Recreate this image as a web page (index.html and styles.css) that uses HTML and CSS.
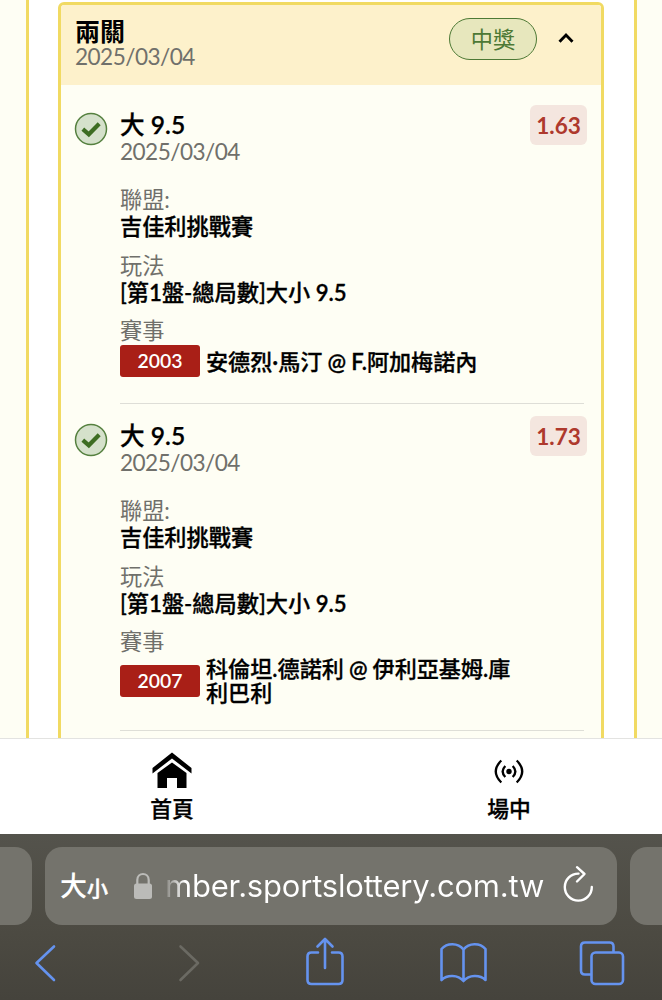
FILE: index.html
```html
<!DOCTYPE html>
<html lang="zh-Hant">
<head>
<meta charset="utf-8">
<title>投注紀錄</title>
<link rel="stylesheet" href="styles.css">
</head>
<body>
<div class="screen">
  <main class="page">
    <div class="outer">
      <section class="ticket">
        <header class="ticket-head">
          <div class="ticket-info">
            <h1 class="ticket-title">兩關</h1>
            <div class="date">2025/03/04</div>
          </div>
          <span class="status">中獎</span>
          <svg class="caret" width="16" height="12" viewBox="0 0 16 12"><path d="M1.500 9.700L8 3L14.500 9.700" fill="none" stroke="#000" stroke-width="2.900"/></svg>
        </header>
        <article class="bet">
          <svg class="check" width="34" height="34" viewBox="0 0 34 34"><circle cx="17" cy="17" r="15.500" fill="#d5e1cb" stroke="#55803f" stroke-width="1.500"/><path d="M8.800 17.200L14.800 22.300L25.200 11.800" fill="none" stroke="#3d6d22" stroke-width="4.200"/></svg>
          <div class="bet-body">
            <div class="bet-top"><div><h2 class="bet-title">大 <b>9.5</b></h2><div class="date">2025/03/04</div></div><span class="odds">1.63</span></div>
            <dl class="facts">
              <dt>聯盟:</dt><dd>吉佳利挑戰賽</dd>
              <dt>玩法</dt><dd>[第<b>1</b>盤-總局數]大小 <b>9.5</b></dd>
              <dt class="event-label">賽事</dt>
            </dl>
            <div class="event"><span class="code">2003</span><span class="teams">安德烈<b>·</b>馬汀 <b>@</b> <b>F.</b>阿加梅諾內</span></div>
          </div>
        </article>
        <article class="bet second">
          <svg class="check" width="34" height="34" viewBox="0 0 34 34"><circle cx="17" cy="17" r="15.500" fill="#d5e1cb" stroke="#55803f" stroke-width="1.500"/><path d="M8.800 17.200L14.800 22.300L25.200 11.800" fill="none" stroke="#3d6d22" stroke-width="4.200"/></svg>
          <div class="bet-body">
            <div class="bet-top"><div><h2 class="bet-title">大 <b>9.5</b></h2><div class="date">2025/03/04</div></div><span class="odds">1.73</span></div>
            <dl class="facts">
              <dt>聯盟:</dt><dd>吉佳利挑戰賽</dd>
              <dt>玩法</dt><dd>[第<b>1</b>盤-總局數]大小 <b>9.5</b></dd>
              <dt class="event-label">賽事</dt>
            </dl>
            <div class="event double"><span class="code">2007</span><span class="teams">科倫坦<b>.</b>德諾利 <b>@</b> 伊利亞基姆<b>.</b>庫<br>利巴利</span></div>
          </div>
        </article>
      </section>
    </div>
  </main>
  <nav class="tabs">
    <a class="tab home"><svg width="40" height="38" viewBox="0 0 40 38"><path d="M20 0.500L39.500 16V21.500L20 6.500L0.500 21.500V16Z"/><path d="M20 10.500L34.500 21V36H25V26H15V36H5.500V21Z"/></svg><span>首頁</span></a>
    <a class="tab live"><svg width="40" height="38" viewBox="0 0 40 38"><circle cx="20" cy="19.500" r="2.700"/><path d="M16.300 14Q11 19.500 16.300 25M23.700 14Q29 19.500 23.700 25M12.300 8.500Q1.300 19.500 12.300 30.500M27.700 8.500Q38.700 19.500 27.700 30.500" fill="none" stroke="#000" stroke-width="2.300"/></svg><span>場中</span></a>
  </nav>
  <footer class="browser">
    <div class="address-row">
      <div class="side left"></div>
      <div class="address">
        <span class="big">大</span><span class="small">小</span>
        <svg class="lock" width="20" height="28" viewBox="0 0 20 28"><rect x="1" y="11.500" width="18" height="15.500" rx="2.500" fill="#bbbbb8"/><path d="M4.300 12.500V8C4.300 0 15.700 0 15.700 8V12.500" fill="none" stroke="#bbbbb8" stroke-width="2.200"/></svg>
        <span class="url">mber.sportslottery.com.tw</span>
        <svg class="reload" width="32" height="38" viewBox="0 0 32 38"><path d="M16.500 8.600A13.500 13.500 0 1 0 29.800 22" fill="none" stroke="#fff" stroke-width="2.400" stroke-linecap="round"/><path d="M15 2.200L22.500 9L15 16.500" fill="none" stroke="#fff" stroke-width="2.400" stroke-linecap="round" stroke-linejoin="round"/></svg>
      </div>
      <div class="side right"></div>
    </div>
    <svg class="tools" width="662" height="60" viewBox="0 930 662 60" fill="none" stroke="#6593ef" stroke-width="2.600" stroke-linecap="round" stroke-linejoin="round">
      <path d="M54 946.500L36.500 963L54 980"/>
      <path d="M180.500 946.500L198 963L180.500 980" stroke="#6b6a63"/>
      <path d="M318 952.500H311.500Q307.500 952.500 307.500 956.500V980Q307.500 984 311.500 984H338.500Q342.500 984 342.500 980V956.500Q342.500 952.500 338.500 952.500H332M325 968V939.500M317.500 946.500L325 939L332.500 946.500"/>
      <path d="M463.500 981C458 974.500 447 974.500 441.500 980V949C447 942.500 458 942.500 463.500 949.500C469 942.500 480 942.500 485.500 949V980C480 974.500 469 974.500 463.500 981V949.500"/>
      <path d="M590.500 974.500H585Q581 974.500 581 970.500V946.500Q581 942.500 585 942.500H609.500Q613.500 942.500 613.500 946.500V951.500"/><rect x="591.500" y="952.500" width="31.500" height="31.500" rx="4"/>
    </svg>
  </footer>
</div>
</body>
</html>
```
FILE: styles.css
```css
* { box-sizing: border-box; }
body { margin: 0; background: #fff; color: #000; font-family: Lato, "Noto Sans CJK TC", sans-serif; font-size: 22.2px; }
h1, h2, dl, dd { margin: 0; }
svg { display: block; flex: none; }
b { font-weight: 600; }
.screen { width: 662px; height: 1000px; display: flex; flex-direction: column; overflow: hidden; }
.page { height: 738px; overflow: hidden; background: #fefef4; padding: 0 25px 0 26px; }
.outer { height: 738px; background: #fff; border: solid #f1da62; border-width: 0 3px; padding: 2px 30px 0 29px; }
.ticket { height: 760px; background: #fefef4; border: 3px solid #f1da62; border-radius: 6px; overflow: hidden; }
.ticket-head { height: 80px; background: #fdf1cb; display: flex; align-items: flex-start; padding: 13px 27px 0 15px; }
.ticket-info { flex: 1; }
.ticket-title { font-size: 25px; font-weight: 700; line-height: 26px; margin-left: -1px; }
.date { color: #70706b; font-size: 22.6px; letter-spacing: -0.55px; line-height: 26px; white-space: nowrap; }
.ticket-info .date { margin-left: -1px; }
.status { width: 88px; height: 42px; border: 1.5px solid #4d7935; border-radius: 21px; background: #e7e7bd; color: #4d7935; text-align: center; line-height: 41px; }
.caret { margin: 14px 0 0 21px; }
.bet { display: flex; padding: 20px 14px 0 13px; height: 311px; }
.check { margin-top: 7px; }
.bet-body { flex: 1; margin-left: 12px; }
.bet-top { display: flex; justify-content: space-between; height: 80px; padding-top: 7px; }
.bet-title { font-size: 24.6px; font-weight: 500; line-height: 26px; white-space: nowrap; -webkit-text-stroke: 0.25px #000; }
.bet-title b { font-weight: 600; }
.bet-title + .date { padding-top: 1px; }
.odds { width: 57px; height: 40px; margin-top: -7px; border-radius: 6px; background: #f4e6df; color: #ae392d; font-size: 22.6px; font-weight: 700; line-height: 41px; text-align: center; }
.facts dt { color: #70706b; line-height: 28px; padding-top: 1px; }
.facts dd { font-weight: 500; line-height: 27px; margin-top: -1px; margin-bottom: 10.5px; white-space: nowrap; -webkit-text-stroke: 0.3px #000; }
.facts .event-label { height: 29px; }
.event { display: flex; align-items: center; width: 464px; height: 59px; padding-bottom: 26px; border-bottom: 1.5px solid #deded7; }
.event.double { height: 75px; padding-bottom: 25px; }
.code { width: 80px; height: 32px; margin-right: 6px; border-radius: 3px; background: #a91f17; color: #fff; font-size: 19.4px; font-weight: 600; line-height: 32px; text-align: center; }
.teams { font-weight: 500; font-size: 22.1px; line-height: 24px; padding-top: 1px; white-space: nowrap; word-spacing: -0.5px; -webkit-text-stroke: 0.3px #000; }
.tabs { height: 95.5px; border-top: 1.5px solid #e3e3e1; background: #fff; display: flex; justify-content: space-between; padding: 13px 131px 0 150px; flex: none; }
.tab { display: flex; flex-direction: column; align-items: center; width: 44px; font-weight: 500; font-size: 21.8px; line-height: 30px; gap: 4px; white-space: nowrap; -webkit-text-stroke: 0.3px #000; }
.tab svg { fill: #000; }
.browser { flex: 1; background: linear-gradient(#54534c, #4c4a42 60%, #45433c); padding-top: 13px; }
.address-row { display: flex; justify-content: space-between; height: 78px; }
.side { width: 32px; background: #74736c; }
.left { border-radius: 0 17px 17px 0; }
.right { border-radius: 17px 0 0 17px; }
.address { width: 572px; border-radius: 17px; background: #74736c; color: #fff; display: flex; align-items: center; padding-left: 15px; }
.big { font-size: 27px; font-weight: 500; line-height: 78px; }
.small { font-size: 21px; font-weight: 500; padding-top: 3px; -webkit-text-stroke: 0.5px #fff; }
.lock { margin-left: 25px; }
.url { margin-left: 12px; width: 381px; font-family: Inter, "Liberation Sans", sans-serif; font-size: 31px; letter-spacing: -0.2px; white-space: nowrap; background: linear-gradient(90deg, #85847e, #fff 20px); background-clip: text; -webkit-background-clip: text; color: transparent; }
.reload { margin: -4px 0 0 16px; }
.tools { margin-top: 5px; }
```
